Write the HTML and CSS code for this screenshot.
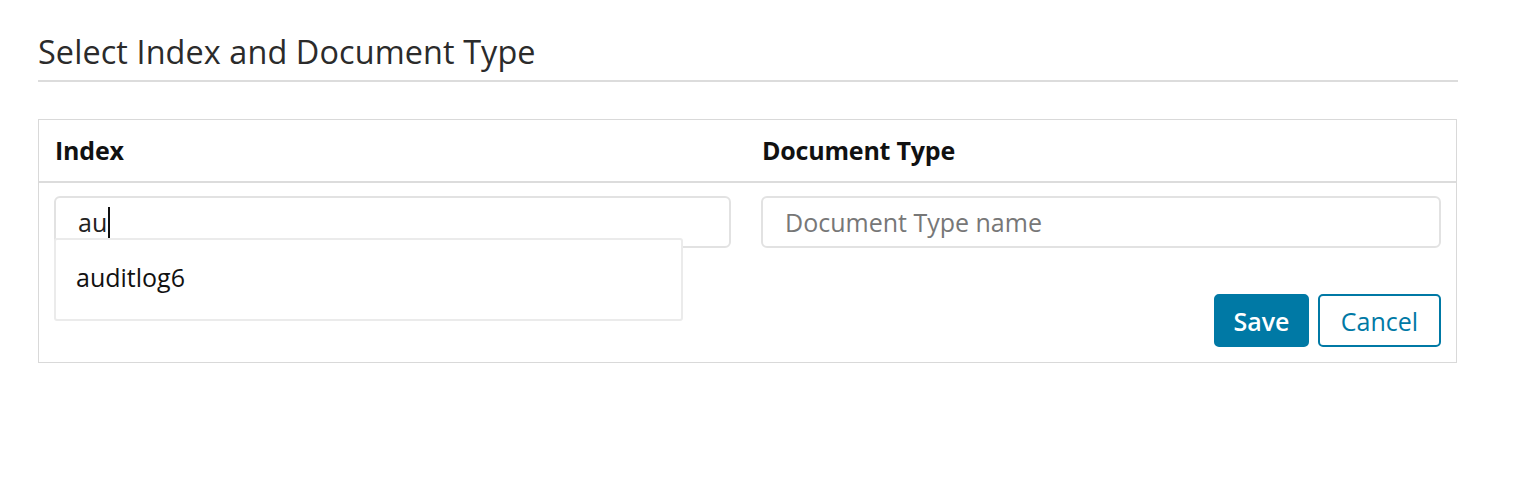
FILE: index.html
```html
<!DOCTYPE html>
<html>
<head>
<meta charset="utf-8">
<link rel="stylesheet" href="styles.css">
</head>
<body>
<div class="page">
  <h1 class="title">Select Index and Document Type</h1>
  <div class="panel">
    <div class="head-row">
      <div class="head-cell">Index</div>
      <div class="head-cell">Document Type</div>
    </div>
    <div class="body-row">
      <div class="cell">
        <div class="field field-active"><span class="value">au</span><span class="caret"></span></div>
        <div class="dropdown">
          <div class="option">auditlog6</div>
        </div>
      </div>
      <div class="cell">
        <div class="field"><span class="placeholder">Document Type name</span></div>
        <div class="actions">
          <button class="btn btn-primary">Save</button>
          <button class="btn btn-outline">Cancel</button>
        </div>
      </div>
    </div>
  </div>
</div>
</body>
</html>
```
FILE: styles.css
```css
* { box-sizing: border-box; }
html, body { margin: 0; padding: 0; background: #fff; }
body {
  font-family: "Open Sans", "Liberation Sans", sans-serif;
  color: #333;
}
.page {
  margin-left: 38px;
  width: 1420px;
  padding-top: 31px;
}
.title {
  margin: 0;
  font-size: 32.4px;
  font-weight: 400;
  line-height: 40px;
  color: #2b2b2b;
  padding-bottom: 9px;
  border-bottom: 2px solid #dcdcdc;
  letter-spacing: 0.1px;
}
.panel {
  margin-top: 37px;
  border: 1px solid #d9d9d9;
  width: 1419px;
}
.head-row {
  display: grid;
  grid-template-columns: 677px 680px;
  column-gap: 30px;
  padding: 0 15px 0 16px;
  height: 63px;
  align-items: center;
  border-bottom: 2px solid #dcdcdc;
}
.head-cell {
  font-size: 25px;
  font-weight: 700;
  color: #111;
  line-height: 30px;
  margin-top: -1px;
  letter-spacing: -0.2px;
}
.body-row {
  display: grid;
  grid-template-columns: 677px 680px;
  column-gap: 30px;
  padding: 13px 15px 15px 15px;
}
.cell {
  position: relative;
}
.field {
  height: 52px;
  border: 2px solid #e2e2e2;
  border-radius: 6px;
  display: flex;
  align-items: center;
  padding: 0 22px;
  font-size: 25px;
  color: #333;
}
.value { color: #222; }
.caret {
  display: inline-block;
  width: 2px;
  height: 31px;
  background: #111;
  margin-left: 1px;
}
.placeholder { color: #777; }
.dropdown {
  position: absolute;
  left: 0;
  top: 42px;
  width: 629px;
  height: 83px;
  background: #fff;
  border: 2px solid #ebebeb;
  border-radius: 3px;
  padding: 17px 20px;
}
.option {
  font-size: 25px;
  line-height: 40px;
  color: #111;
}
.actions {
  display: flex;
  justify-content: flex-end;
  gap: 9px;
  margin-top: 46px;
}
.btn {
  font-family: "Open Sans", "Liberation Sans", sans-serif;
  font-size: 25px;
  height: 53px;
  border-radius: 5px;
  padding: 0;
  cursor: pointer;
}
.btn-primary {
  background: #0079a5;
  border: 2px solid #0079a5;
  color: #fff;
  font-weight: 600;
  width: 95px;
}
.btn-outline {
  background: #fff;
  border: 2px solid #0079a5;
  color: #0079a5;
  font-weight: 400;
  width: 123px;
}
```
